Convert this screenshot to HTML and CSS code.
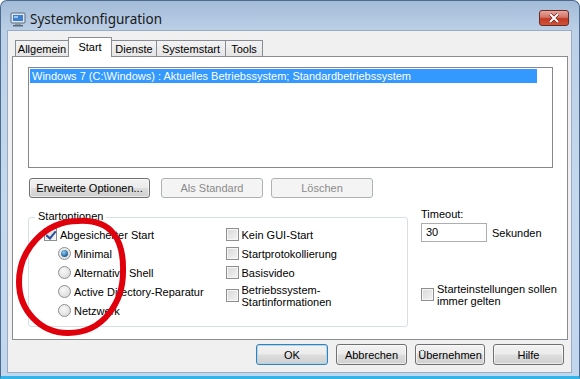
FILE: index.html
```html
<!DOCTYPE html>
<html lang="de">
  <head>
    <meta charset="UTF-8" />
    <title>Systemkonfiguration</title>
    <link rel="stylesheet" href="styles.css">
  </head>
  <body>
    <div class="window">
      <div class="titlebar">
        <svg class="app-icon" width="16" height="15" viewBox="0 0 16 15">
          <rect x="1" y="1" width="14" height="10" rx="1" fill="#dfe6ee" stroke="#5b6b7d" />
          <rect x="3" y="3" width="10" height="6" fill="#3f7fd0" />
          <rect x="4" y="4" width="4" height="2" fill="#9cc6f2" />
          <rect x="5" y="11" width="6" height="2" fill="#8b96a3" />
          <rect x="3" y="13" width="10" height="1.5" fill="#5b6b7d" />
        </svg>
        <span class="title">Systemkonfiguration</span>
        <div class="close-btn">
          <svg width="12" height="10" viewBox="0 0 12 10">
            <path d="M2 1 L10 9 M10 1 L2 9" stroke="#7a1d12" stroke-width="3.4" />
            <path d="M2 1 L10 9 M10 1 L2 9" stroke="#ffffff" stroke-width="2" />
          </svg>
        </div>
      </div>

      <div class="client">
        <div class="tabs">
          <div class="tab tab-allgemein">Allgemein</div>
          <div class="tab tab-start active">Start</div>
          <div class="tab tab-dienste">Dienste</div>
          <div class="tab tab-systemstart">Systemstart</div>
          <div class="tab tab-tools">Tools</div>
        </div>

        <div class="panel">
          <div class="listbox">
            <div class="list-item selected">Windows 7 (C:\Windows) : Aktuelles Betriebssystem; Standardbetriebssystem</div>
          </div>

          <div class="list-buttons">
            <button class="btn btn-advanced">Erweiterte Optionen...</button>
            <button class="btn btn-default" disabled>Als Standard</button>
            <button class="btn btn-delete" disabled>Löschen</button>
          </div>

          <div class="options">
            <div class="group">
              <span class="legend">Startoptionen</span>
              <div class="group-cols">
                <div class="col">
                  <div class="check-row"><span class="checkbox checked"></span>Abgesicherter Start</div>
                  <div class="check-row indent"><span class="radio checked"></span>Minimal</div>
                  <div class="check-row indent"><span class="radio"></span>Alternative Shell</div>
                  <div class="check-row indent"><span class="radio"></span>Active Directory-Reparatur</div>
                  <div class="check-row indent"><span class="radio"></span>Netzwerk</div>
                </div>
                <div class="col col-right">
                  <div class="check-row"><span class="checkbox"></span>Kein GUI-Start</div>
                  <div class="check-row"><span class="checkbox"></span>Startprotokollierung</div>
                  <div class="check-row"><span class="checkbox"></span>Basisvideo</div>
                  <div class="check-row multi"><span class="checkbox"></span><span>Betriebssystem-<br>Startinformationen</span></div>
                </div>
              </div>
            </div>

            <div class="timeout-col">
              <div class="label">Timeout:</div>
              <div class="timeout-row">
                <div class="textbox">30</div>
                <span>Sekunden</span>
              </div>
              <div class="check-row multi persist"><span class="checkbox"></span><span>Starteinstellungen sollen<br>immer gelten</span></div>
            </div>
          </div>
        </div>

        <div class="dialog-buttons">
          <button class="btn btn-ok">OK</button>
          <button class="btn btn-cancel">Abbrechen</button>
          <button class="btn btn-apply">Übernehmen</button>
          <button class="btn btn-help">Hilfe</button>
        </div>
      </div>

      <!-- red marker drawn over the dialog -->
      <svg class="marker" width="580" height="379" viewBox="0 0 580 379">
        <path d="M78 221 C112 219 124 240 123 272 C123 300 105 333 68 333 C40 333 19 310 19 282 C19 250 45 221 78 221 Z"
              fill="none" stroke="#e0000c" stroke-width="6" />
      </svg>
    </div>
  </body>
</html>
```

FILE: styles.css
```css
* {
  margin: 0;
  padding: 0;
  box-sizing: border-box;
}

body {
  width: 580px;
  height: 379px;
  overflow: hidden;
  font-family: "Liberation Sans", Arial, sans-serif;
  font-size: 11px;
  color: #000;
  background: #ffffff;
}

.window {
  position: relative;
  width: 580px;
  height: 379px;
  border: 1px solid #4a6a8e;
  border-radius: 7px 7px 0 0;
  background: linear-gradient(to bottom, #a3bbd7 0px, #bcd0e7 30px, #c4d8ee 200px, #c2d7ee 100%);
  border-bottom: 3px solid #33b4e8;
}

.titlebar {
  height: 29px;
  display: flex;
  align-items: center;
  padding-left: 9px;
  padding-top: 7px;
}

.app-icon {
  margin-right: 4px;
}

.title {
  font-family: "Noto Sans", sans-serif;
  font-size: 13.5px;
  color: #1a1a1a;
}

.close-btn {
  margin-left: auto;
  margin-right: 10px;
  margin-top: -3px;
  width: 30px;
  height: 16px;
  border: 1px solid #6c2b25;
  border-radius: 3px;
  background: linear-gradient(to bottom, #e6a79d 0%, #d47366 45%, #c23a24 55%, #d2543b 100%);
  display: flex;
  align-items: center;
  justify-content: center;
}

.client {
  margin: 0 7px 0 6px;
  height: 343px;
  background: #f0f0f0;
  border: 1px solid #98adc5;
  padding-top: 6px;
}

/* Tabs */
.tabs {
  display: flex;
  align-items: flex-end;
  padding-left: 7px;
  height: 19px;
  position: relative;
  z-index: 1;
}

.tab {
  height: 16px;
  border: 1px solid #898c95;
  border-bottom: none;
  margin-right: -1px;
  background: linear-gradient(to bottom, #f3f3f3, #e5e5e5);
  display: flex;
  align-items: center;
  justify-content: center;
  padding-top: 1px;
}

.tab.active {
  height: 20px;
  margin-bottom: -1px;
  background: #ffffff;
  align-items: flex-start;
  padding-top: 3px;
}

.tab-allgemein { width: 54px; }
.tab-start { width: 44px; }
.tab-dienste { width: 46px; }
.tab-systemstart { width: 70px; }
.tab-tools { width: 38px; }

.panel {
  margin-left: 4px;
  width: 556px;
  height: 284px;
  border: 1px solid #898c95;
  background: #ffffff;
  padding: 10px 0 0 15px;
}

.listbox {
  width: 525px;
  height: 101px;
  border: 1px solid #828790;
  background: #ffffff;
  padding: 1px;
}

.list-item {
  height: 14px;
  line-height: 14px;
  padding-left: 2px;
  margin-right: 14px;
  white-space: nowrap;
}

.list-item.selected {
  background: #3399ff;
  color: #ffffff;
}

.list-buttons {
  display: flex;
  margin-top: 10px;
  padding-left: 1px;
}

.btn {
  height: 20px;
  font-family: "Liberation Sans", Arial, sans-serif;
  font-size: 11px;
  color: #000;
  border: 1px solid #707070;
  border-radius: 3px;
  background: linear-gradient(to bottom, #f2f2f2 0%, #ebebeb 48%, #dddddd 52%, #cfcfcf 100%);
  box-shadow: inset 0 0 0 1px rgba(255, 255, 255, 0.6);
}

.btn:disabled {
  color: #8a8a8a;
  border-color: #adb2b5;
  background: #f4f4f4;
  box-shadow: none;
}

.btn-advanced { width: 121px; margin-right: 11px; }
.btn-default { width: 102px; margin-right: 8px; }
.btn-delete { width: 102px; }

/* Options area */
.options {
  display: flex;
  margin-top: 19px;
}

.group {
  position: relative;
  width: 380px;
  height: 110px;
  border: 1px solid #d5dfe5;
  border-radius: 3px;
  padding: 7px 0 0 15px;
}

.legend {
  position: absolute;
  top: -8px;
  left: 6px;
  padding: 0 3px;
  background: #ffffff;
}

.group-cols {
  display: flex;
}

.col {
  width: 185px;
}

.check-row {
  display: flex;
  align-items: center;
  height: 19px;
}

.check-row.indent {
  padding-left: 14px;
}

.check-row.multi {
  align-items: flex-start;
  height: auto;
  line-height: 12px;
  padding-top: 2px;
}

.check-row.multi .checkbox {
  margin-top: 5px;
}

.checkbox {
  width: 13px;
  height: 13px;
  border: 1px solid #8e8f8f;
  background: linear-gradient(135deg, #d8d8d8, #f4f4f4);
  box-shadow: inset 0 0 0 1px #f6f6f6;
  margin-right: 3px;
  flex-shrink: 0;
  position: relative;
}

.checkbox.checked::after {
  content: "";
  position: absolute;
  left: 3px;
  top: 0px;
  width: 4px;
  height: 8px;
  border: solid #2a4f9a;
  border-width: 0 2px 2px 0;
  transform: rotate(40deg);
}

.radio {
  width: 13px;
  height: 13px;
  border: 1px solid #8e8f8f;
  border-radius: 50%;
  background: radial-gradient(circle at 40% 35%, #f8f8f8, #d6d6d6);
  margin-right: 3px;
  flex-shrink: 0;
  position: relative;
}

.radio.checked::after {
  content: "";
  position: absolute;
  left: 2px;
  top: 2px;
  width: 7px;
  height: 7px;
  border-radius: 50%;
  background: radial-gradient(circle at 40% 35%, #8fd0f5, #1d5c95 70%);
}

.timeout-col {
  margin-left: 13px;
  margin-top: -9px;
}

.timeout-row {
  display: flex;
  align-items: center;
  margin-top: 3px;
}

.textbox {
  width: 66px;
  height: 19px;
  border: 1px solid #abadb3;
  background: #ffffff;
  padding: 2px 0 0 4px;
  margin-right: 5px;
}

.check-row.persist {
  margin-top: 39px;
}

.dialog-buttons {
  display: flex;
  justify-content: flex-end;
  gap: 8px;
  margin-top: 4px;
  padding-right: 7px;
}

.dialog-buttons .btn {
  height: 21px;
}

.btn-ok { width: 72px; }
.btn-cancel { width: 71px; }
.btn-apply { width: 70px; }
.btn-help { width: 71px; }

.dialog-buttons .btn-ok {
  border-color: #3c7fb1;
  box-shadow: inset 0 0 0 1px #a8d8f3;
}

.marker {
  position: absolute;
  left: -1px;
  top: -1px;
  pointer-events: none;
}
```
